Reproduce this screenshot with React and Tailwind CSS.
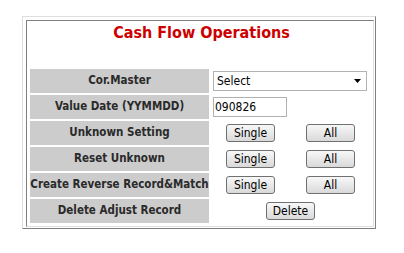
export default function App() {
  const label =
    "bg-[#cccccc] w-[179px] h-[24px] flex items-center justify-center text-[11.5px] font-bold text-[#2a2a2a] whitespace-nowrap";
  const btn =
    "w-[49px] h-[18px] flex items-center justify-center border border-[#707070] rounded-[3px] bg-gradient-to-b from-[#f8f8f8] to-[#d9d9d9] text-[12px] text-black leading-none";
  const Row = ({ text, children }) => (
    <div className="flex gap-[2px]">
      <div className={label}>{text}</div>
      <div className="w-[160px] h-[24px] flex items-center">{children}</div>
    </div>
  );
  const Pair = () => (
    <div className="flex items-center pl-[15px] gap-[31px]">
      <div className={btn}>Single</div>
      <div className={btn}>All</div>
    </div>
  );
  return (
    <div className="w-[404px] h-[253px] bg-white pt-[16px] pl-[22px] font-['DejaVu_Sans_Condensed','DejaVu_Sans',sans-serif]">
      <div className="w-[354px] h-[213px] border-t border-l border-[#dedede] border-r-[#7f7f7f] border-b-[#7f7f7f] border-r border-b pt-[3px] pl-[3px]">
        <div className="w-[348px] h-[207px] border-t border-l border-[#7f7f7f] border-r border-b border-r-[#e0e0e0] border-b-[#e0e0e0] bg-white pl-[3px]">
          <div className="h-[24px] flex items-center justify-center text-[16px] font-bold text-[#cc0000]">
            Cash Flow Operations
          </div>
          <div className="mt-[24px] flex flex-col gap-[2px]">
            <Row text="Cor.Master">
              <div className="ml-[2px] w-[154px] h-[20px] border border-[#b2b2b2] flex items-center justify-between pl-[3px] pr-[5px] text-[12px] text-black">
                <span>Select</span>
                <svg width="7" height="4" viewBox="0 0 7 4">
                  <path d="M0 0H7L3.5 4Z" fill="#000" />
                </svg>
              </div>
            </Row>
            <Row text="Value Date (YYMMDD)">
              <div className="ml-[2px] w-[74px] h-[20px] border border-[#b2b2b2] flex items-center pl-[1px] text-[12px] text-black">
                090826
              </div>
            </Row>
            <Row text="Unknown Setting">
              <Pair />
            </Row>
            <Row text="Reset Unknown">
              <Pair />
            </Row>
            <Row text="Create Reverse Record&Match">
              <Pair />
            </Row>
            <Row text="Delete Adjust Record">
              <div className="pl-[55px] flex">
                <div className={btn}>Delete</div>
              </div>
            </Row>
          </div>
        </div>
      </div>
    </div>
  );
}
